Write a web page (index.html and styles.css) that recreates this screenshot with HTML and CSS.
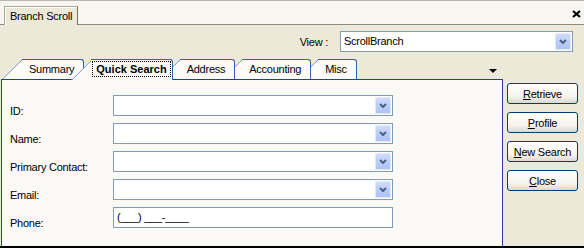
FILE: index.html
```html
<!DOCTYPE html>
<html lang="en">
<head>
  <meta charset="UTF-8" />
  <title>Branch Scroll</title>
  <link rel="stylesheet" href="styles.css">
</head>
<body>
  <div class="window">
    <div class="doc-tabs">
      <div class="doc-tab">Branch Scroll</div>
      <svg class="doc-close" viewBox="0 0 9 8" width="9" height="8">
        <path d="M1 1 L8 7 M8 1 L1 7" stroke="#000" stroke-width="2.2" fill="none" />
      </svg>
    </div>

    <div class="view-row">
      <span class="view-label">View :</span>
      <div class="combo view-combo">
        <span class="combo-text">ScrollBranch</span>
        <span class="combo-btn"><svg viewBox="0 0 8 5" width="8" height="5"><path d="M1 1 L4 4 L7 1" /></svg></span>
      </div>
    </div>

    <div class="main">
      <div class="tab-area">
        <div class="tabs">
          <div class="tab">Summary</div>
          <div class="tab active"><span class="focus">Quick Search</span></div>
          <div class="tab">Address</div>
          <div class="tab">Accounting</div>
          <div class="tab">Misc</div>
          <span class="tabs-menu"></span>
        </div>

        <div class="panel">
          <div class="form">
            <label>ID:</label>
            <div class="combo">
              <span class="combo-text"></span>
              <span class="combo-btn"><svg viewBox="0 0 8 5" width="8" height="5"><path d="M1 1 L4 4 L7 1" /></svg></span>
            </div>

            <label>Name:</label>
            <div class="combo">
              <span class="combo-text"></span>
              <span class="combo-btn"><svg viewBox="0 0 8 5" width="8" height="5"><path d="M1 1 L4 4 L7 1" /></svg></span>
            </div>

            <label>Primary Contact:</label>
            <div class="combo">
              <span class="combo-text"></span>
              <span class="combo-btn"><svg viewBox="0 0 8 5" width="8" height="5"><path d="M1 1 L4 4 L7 1" /></svg></span>
            </div>

            <label>Email:</label>
            <div class="combo">
              <span class="combo-text"></span>
              <span class="combo-btn"><svg viewBox="0 0 8 5" width="8" height="5"><path d="M1 1 L4 4 L7 1" /></svg></span>
            </div>

            <label>Phone:</label>
            <div class="field">(___) ___-____</div>
          </div>
        </div>
      </div>

      <div class="actions">
        <button class="btn"><u>R</u>etrieve</button>
        <button class="btn"><u>P</u>rofile</button>
        <button class="btn"><u>N</u>ew Search</button>
        <button class="btn"><u>C</u>lose</button>
      </div>
    </div>
  </div>
</body>
</html>
```

FILE: styles.css
```css
body {
  margin: 0;
  font-family: "Liberation Sans", Arial, sans-serif;
  font-size: 11px;
  letter-spacing: -0.25px;
  color: #000;
  background: #ece9d8;
}

.window {
  width: 584px;
  height: 248px;
  box-sizing: border-box;
  border-bottom: 2px solid #000;
  background: #ece9d8;
  overflow: hidden;
}

/* document tab strip */
.doc-tabs {
  display: flex;
  align-items: flex-end;
  height: 25px;
  box-sizing: border-box;
  padding-left: 4px;
  background: #f7f6f1;
  border-top: 1px solid #b9b6aa;
  border-bottom: 1px solid #8d8b80;
}

.doc-tab {
  height: 19px;
  box-sizing: border-box;
  margin-bottom: -1px;
  padding: 0 5px;
  line-height: 18px;
  background: #ece9d8;
  border: 1px solid #aca899;
  border-bottom: 0;
  border-right-color: #716f64;
  box-shadow: inset 1px 1px 0 #fff;
}

.doc-close {
  align-self: flex-start;
  margin: 9px 3px 0 auto;
}

/* view selector */
.view-row {
  display: flex;
  justify-content: flex-end;
  align-items: center;
  gap: 12px;
  height: 34px;
  box-sizing: border-box;
  padding: 6px 11px 7px 0;
}

.combo {
  display: flex;
  height: 21px;
  box-sizing: border-box;
  padding: 1px;
  border: 1px solid #7f9db9;
  background: #fff;
}

.view-combo {
  width: 233px;
}

.combo-text {
  flex: 1;
  padding-left: 2px;
  line-height: 17px;
}

.combo-btn {
  display: flex;
  align-items: center;
  justify-content: center;
  width: 16px;
  border-radius: 2px;
  background: linear-gradient(#d2defd, #b6cbf8 60%, #aec3f3);
  box-shadow: inset 0 0 0 1px #e1e9fd;
}

.combo-btn svg path {
  fill: none;
  stroke: #4d6185;
  stroke-width: 2;
}

/* tab control */
.main {
  display: flex;
  height: 187px;
}

.tab-area {
  width: 503px;
}

.tabs {
  display: flex;
  align-items: flex-start;
  height: 20px;
  padding-left: 2px;
}

.tab {
  position: relative;
  height: 20px;
  box-sizing: border-box;
  padding: 0 10px 0 27px;
  line-height: 20px;
  white-space: nowrap;
}

.tab + .tab {
  margin-left: -13px;
}

.tab::before,
.tab::after {
  content: "";
  position: absolute;
  top: 0;
  bottom: 0;
  z-index: -1;
  background: #fcfbf8;
  border-top: 1px solid #3461b0;
}

.tab::before {
  left: 0;
  width: 30px;
  border-left: 1px solid #3461b0;
  border-top-left-radius: 3px;
  transform: skewX(-45deg);
  transform-origin: 0 100%;
}

.tab::after {
  left: 20px;
  right: 0;
  border-right: 1px solid #3461b0;
  border-top-right-radius: 3px;
}

.tab:nth-child(1) { z-index: 5; }
.tab:nth-child(3) { z-index: 4; }
.tab:nth-child(4) { z-index: 3; }
.tab:nth-child(5) { z-index: 2; }

.tab.active {
  z-index: 10;
  height: 21px;
  padding: 2px 2px 0 21px;
  font-weight: bold;
  letter-spacing: 0;
}

.tab.active::before,
.tab.active::after {
  background: #faf9f5;
}

.focus {
  display: block;
  padding: 0 3px;
  line-height: 14px;
  border: 1px dotted #000;
}

.tabs-menu {
  width: 0;
  height: 0;
  margin: 10px 6px 0 auto;
  border-top: 4px solid #000;
  border-left: 4px solid transparent;
  border-right: 4px solid transparent;
}

.panel {
  height: 167px;
  box-sizing: border-box;
  margin-left: 1px;
  padding: 15px 0 0 8px;
  border: 1px solid #20438e;
  border-bottom: 0;
  background: #faf9f5;
}

.form {
  display: grid;
  grid-template-columns: 103px 280px;
  grid-auto-rows: 21px;
  row-gap: 7px;
}

.form label {
  padding-top: 10px;
  line-height: 13px;
}

.field {
  box-sizing: border-box;
  height: 21px;
  padding: 0 3px;
  line-height: 19px;
  border: 1px solid #7f9db9;
  background: #fff;
}

/* command buttons */
.actions {
  display: flex;
  flex-direction: column;
  gap: 8px;
  width: 71px;
  margin-left: 4px;
  padding-top: 24px;
}

.btn {
  height: 21px;
  padding: 0;
  font: inherit;
  letter-spacing: inherit;
  color: #000;
  text-align: center;
  border: 1px solid #003c74;
  border-radius: 3px;
  background: linear-gradient(#fff, #f5f4ef 65%, #dcd8ca);
}
```
